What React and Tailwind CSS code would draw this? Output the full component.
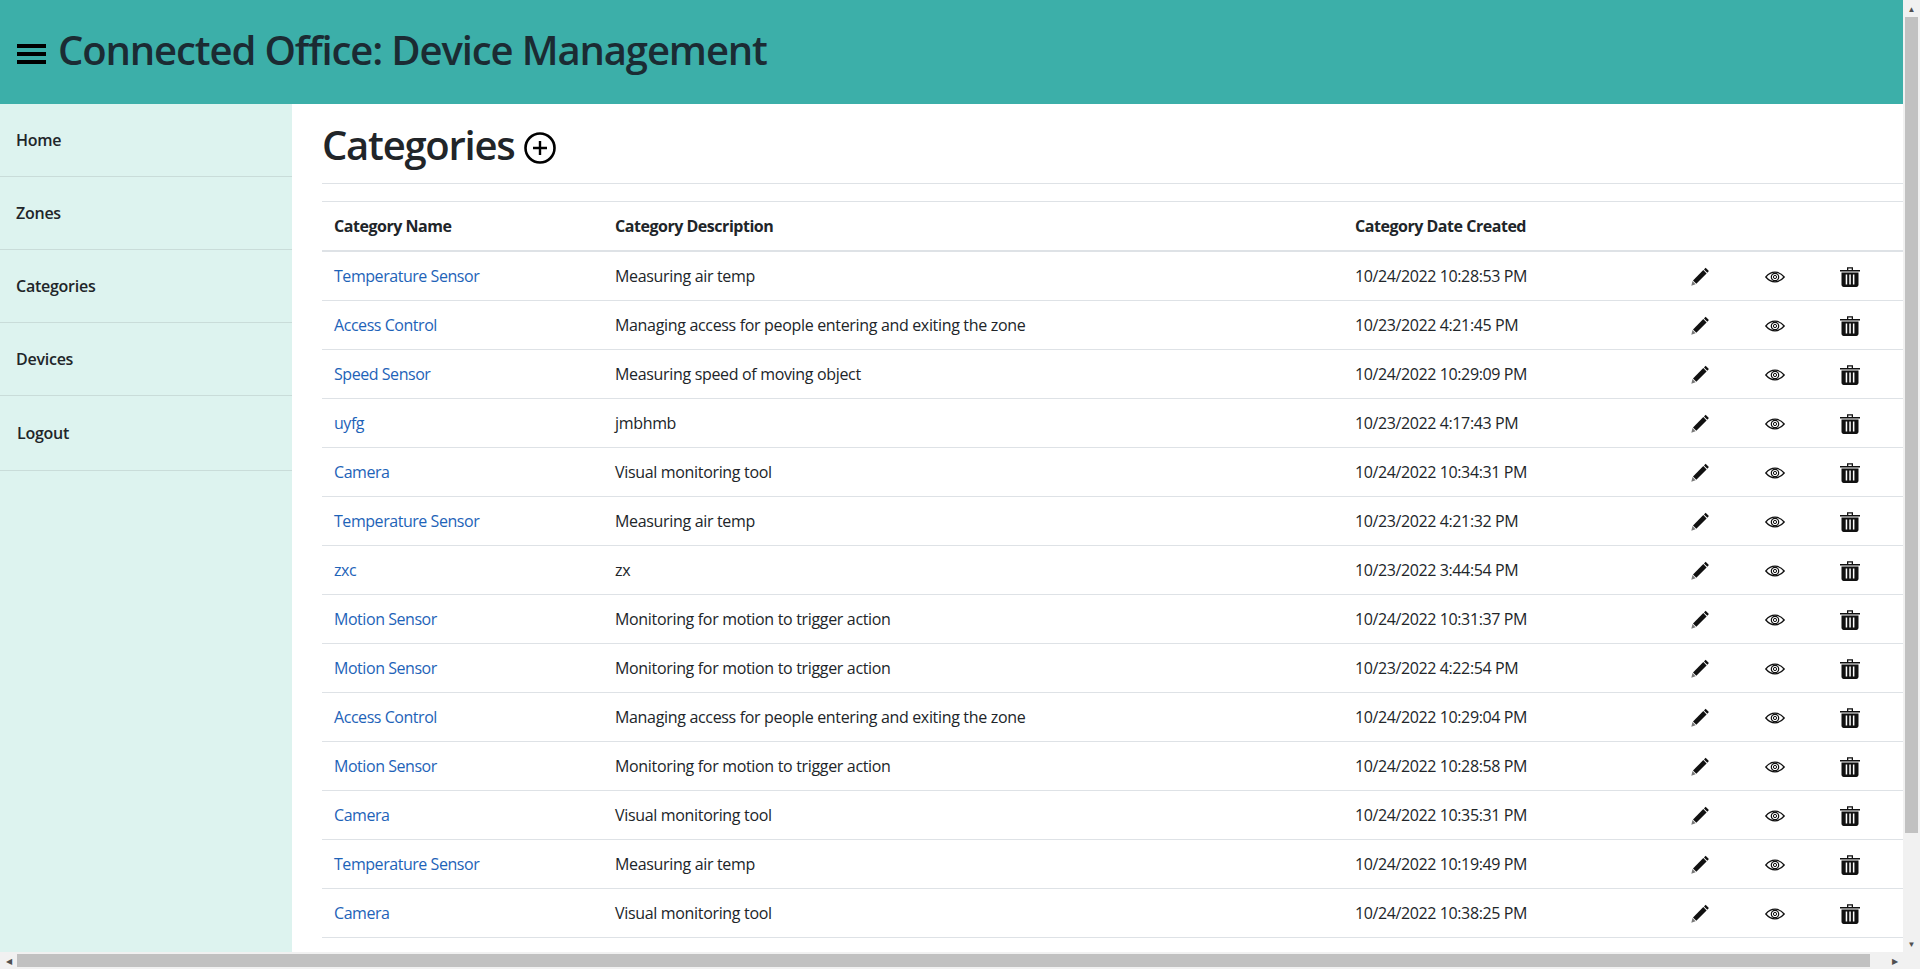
const rows = [
  ["Temperature Sensor", "Measuring air temp", "10/24/2022 10:28:53 PM"],
  ["Access Control", "Managing access for people entering and exiting the zone", "10/23/2022 4:21:45 PM"],
  ["Speed Sensor", "Measuring speed of moving object", "10/24/2022 10:29:09 PM"],
  ["uyfg", "jmbhmb", "10/23/2022 4:17:43 PM"],
  ["Camera", "Visual monitoring tool", "10/24/2022 10:34:31 PM"],
  ["Temperature Sensor", "Measuring air temp", "10/23/2022 4:21:32 PM"],
  ["zxc", "zx", "10/23/2022 3:44:54 PM"],
  ["Motion Sensor", "Monitoring for motion to trigger action", "10/24/2022 10:31:37 PM"],
  ["Motion Sensor", "Monitoring for motion to trigger action", "10/23/2022 4:22:54 PM"],
  ["Access Control", "Managing access for people entering and exiting the zone", "10/24/2022 10:29:04 PM"],
  ["Motion Sensor", "Monitoring for motion to trigger action", "10/24/2022 10:28:58 PM"],
  ["Camera", "Visual monitoring tool", "10/24/2022 10:35:31 PM"],
  ["Temperature Sensor", "Measuring air temp", "10/24/2022 10:19:49 PM"],
  ["Camera", "Visual monitoring tool", "10/24/2022 10:38:25 PM"],
];

const navItems = ["Home", "Zones", "Categories", "Devices", "Logout"];

function Pencil() {
  return (
    <svg width="20" height="20" viewBox="0 0 20 20" className="block -ml-[1px]">
      <path d="M15.600 .8l3.300 3.300-1.600 1.600-3.300-3.300z" fill="#111" />
      <path d="M13.300 3.100l3.300 3.300-10.300 10.300-3.300-3.300z" fill="#111" />
      <path d="M2.500 14.100l3.100 3.100-4.300 1.500z" fill="#777" />
    </svg>
  );
}

function Eye() {
  return (
    <svg width="20" height="20" viewBox="0 0 20 20" fill="none" stroke="#111" className="block">
      <path d="M0.800 10C3.500 6.800 6.600 5.200 10 5.200s6.500 1.600 9.200 4.800c-2.700 3.200-5.800 4.800-9.200 4.800S3.500 13.200 0.800 10z" strokeWidth="1.300" />
      <circle cx="10" cy="10" r="3.700" strokeWidth="1.200" />
      <circle cx="10" cy="10" r="1.600" strokeWidth="1" />
    </svg>
  );
}

function Trash() {
  return (
    <svg width="20" height="20" viewBox="0 0 20 20" className="block">
      <path d="M0 3h20v1.400H0zM7 .3h6v2.700h-1.300V1.500H8.300V3H7z" fill="#111" />
      <path d="M1.500 5.500h17v12.300c0 1.200-.9 2.200-2.100 2.200H3.600c-1.200 0-2.100-1-2.100-2.200z" fill="#111" />
      <path d="M5.700 7.500h1.500v10H5.700zM9.300 7.500h1.500v10H9.300zM12.900 7.500h1.500v10h-1.500z" fill="#fff" />
    </svg>
  );
}

function Plus() {
  return (
    <svg width="32" height="32" viewBox="0 0 32 32" fill="none" stroke="#000" className="block">
      <circle cx="16" cy="16" r="14.500" strokeWidth="2.600" />
      <path d="M16 9v14M9 16h14" strokeWidth="2.400" />
    </svg>
  );
}

export default function App() {
  return (
    <div className="flex flex-col h-screen overflow-hidden bg-white text-[#212529] font-['Open_Sans','Noto_Sans',sans-serif] text-base">
      <div className="flex flex-1 min-h-0">
        <div className="flex flex-col flex-1 min-w-0">
          <header className="flex items-center h-[104px] bg-[#3cafa9] pl-[17px] pb-[4px] text-[#1b2b33]">
            <div className="flex flex-col gap-[4px] w-[29px] mr-[12px] mt-[8px]">
              <span className="h-[4px] bg-black" />
              <span className="h-[4px] bg-black" />
              <span className="h-[4px] bg-black" />
            </div>
            <h1 className="text-[40px] font-[550] leading-[48px] tracking-[-1.12px]">Connected Office: Device Management</h1>
          </header>
          <div className="flex flex-1 min-h-0">
            <aside className="w-[292px] shrink-0 bg-[#ddf3ef]">
              {navItems.map((item) => (
                <div
                  key={item}
                  className={`flex items-center border-b border-[#c9dcd9] font-semibold text-[#212529] tracking-[-0.25px] ${
                    item === "Logout" ? "pl-[17px] h-[75px]" : "pl-[16px] h-[73px]"
                  }`}
                >
                  {item}
                </div>
              ))}
            </aside>
            <main className="flex-1 min-w-0 pl-[30px]">
              <div className="flex items-center h-[80px] border-b border-[#dee2e6] pt-[3px]">
                <h1 className="text-[40px] font-[550] leading-[48px] tracking-[-1.25px] mr-[10px]">Categories</h1>
                <div className="mt-[5px]"><Plus /></div>
              </div>
              <table className="table-fixed w-full mt-[17px] border-t border-[#dee2e6] border-collapse">
                <colgroup>
                  <col className="w-[281px]" />
                  <col className="w-[740px]" />
                  <col className="w-[336px]" />
                  <col className="w-[74px]" />
                  <col className="w-[75px]" />
                  <col className="w-[75px]" />
                </colgroup>
                <thead>
                  <tr className="border-b-2 border-[#dee2e6]">
                    <th className="px-[12px] py-[12px] text-left font-bold tracking-[-0.47px]">Category Name</th>
                    <th className="px-[12px] py-[12px] text-left font-bold tracking-[-0.47px]">Category Description</th>
                    <th className="px-[12px] py-[12px] text-left font-bold tracking-[-0.47px]">Category Date Created</th>
                    <th />
                    <th />
                    <th />
                  </tr>
                </thead>
                <tbody>
                  {rows.map((row, index) => (
                    <tr key={index} className="border-b border-[#dee2e6] h-[49px]">
                      <td className="px-[12px] pt-[1px] pb-0 text-[#1e63b8] tracking-[-0.45px]">{row[0]}</td>
                      <td className="px-[12px] pt-[1px] pb-0 tracking-[-0.33px]">{row[1]}</td>
                      <td className="px-[12px] pt-[1px] pb-0 tracking-[-0.39px]">{row[2]}</td>
                      <td className="px-[12px] pt-[3px] pb-0"><Pencil /></td>
                      <td className="px-[12px] pt-[3px] pb-0"><Eye /></td>
                      <td className="px-[12px] pt-[3px] pb-0"><Trash /></td>
                    </tr>
                  ))}
                </tbody>
              </table>
            </main>
          </div>
        </div>
        <div className="flex flex-col items-center w-[17px] bg-[#f1f1f1]">
          <div className="h-[17px] flex items-center justify-center text-[#505050] text-[8px]">▲</div>
          <div className="w-[13px] h-[816px] bg-[#c1c1c1]" />
          <div className="mt-auto h-[17px] flex items-center justify-center text-[#505050] text-[8px]">▼</div>
        </div>
      </div>
      <div className="flex items-center h-[17px] bg-[#f1f1f1]">
        <div className="w-[17px] flex justify-center text-[#505050] text-[8px]">◀</div>
        <div className="w-[1853px] h-[13px] bg-[#c1c1c1]" />
        <div className="w-[16px] ml-[17px] flex justify-center text-[#505050] text-[8px]">▶</div>
      </div>
    </div>
  );
}
